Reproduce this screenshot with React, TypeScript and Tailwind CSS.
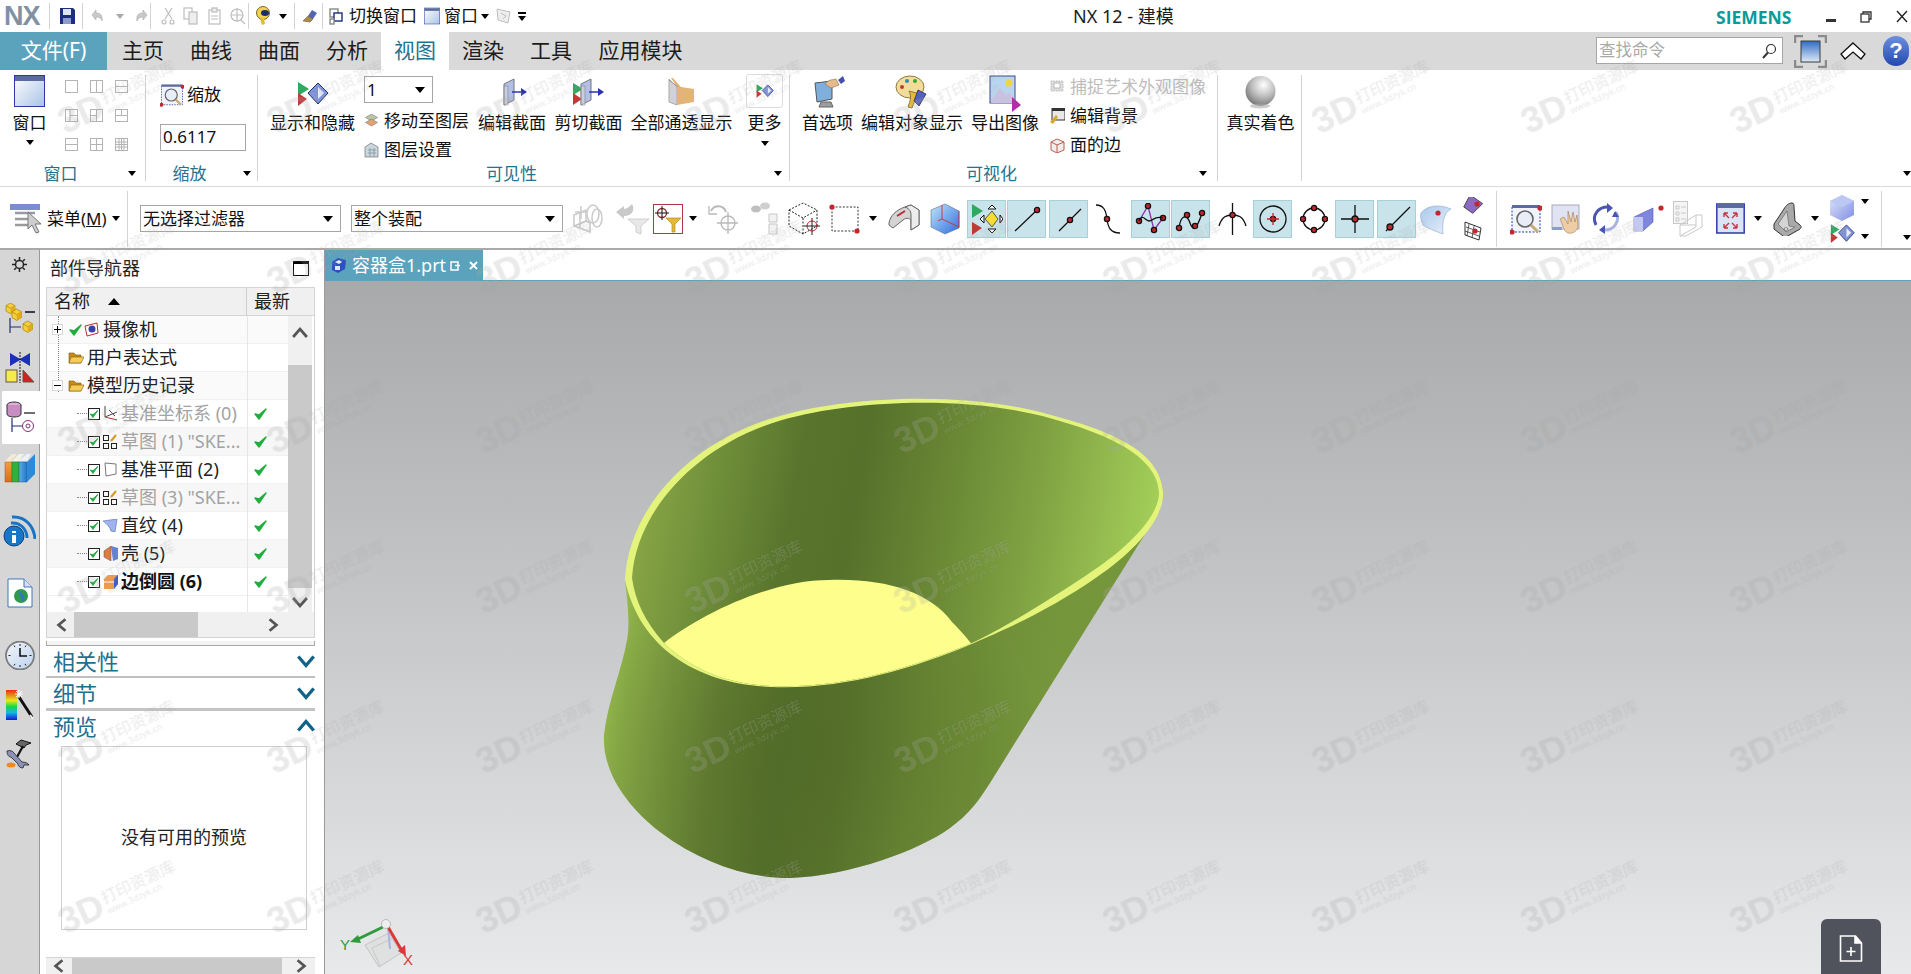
import React from "react";

type P = { className?: string };
const Tri = ({ className = "" }: P) => <div className={"w-0 h-0 shrink-0 border-x-[4px] border-t-[5px] border-x-transparent border-t-black " + className} />;
const Sep = ({ className = "" }: P) => <div className={"w-px bg-[#d4d4d4] shrink-0 " + className} />;
const R = "#c4262e";
const Dot = ({ x, y, r = 2.6 }: { x: number; y: number; r?: number }) => <circle cx={x} cy={y} r={r} fill={R} />;

const Save = ({ className }: P) => (
  <svg className={className} width="15" height="16" viewBox="0 0 15 16"><path d="M0 0h13l2 2v14H0z" fill="#1c2f7a" /><rect x="3" y="1" width="8" height="6" fill="#dfe6f5" /><rect x="3" y="10" width="8" height="6" fill="#8e9ccb" /></svg>
);
const Undo = ({ className, flip }: P & { flip?: boolean }) => (
  <svg className={className} width="13" height="14" viewBox="0 0 13 14"><path d={flip ? "M12 6 8 1v3C4 4 1 6 2 12c1-3 3-4 6-4v3z" : "M1 6 5 1v3c4 0 7 2 6 8-1-3-3-4-6-4v3z"} fill="#c9c9c9" stroke="#aaa" strokeWidth=".6" /></svg>
);
const GrayDoc = ({ className, kind }: P & { kind: number }) => (
  <svg className={className} width="16" height="18" viewBox="0 0 16 18" fill="none" stroke="#bdbdbd" strokeWidth="1.2">
    {kind === 0 && <><path d="M12 1 5 12M5 1l7 11" /><circle cx="4" cy="15" r="2" /><circle cx="12" cy="15" r="2" /></>}
    {kind === 1 && <><rect x="1" y="1" width="8" height="11" /><rect x="6" y="5" width="8" height="12" fill="#eee" /></>}
    {kind === 2 && <><rect x="2" y="3" width="11" height="14" /><rect x="5" y="1" width="5" height="4" fill="#eee" /><path d="M4 9h7M4 12h7" /></>}
    {kind === 3 && <><circle cx="7" cy="8" r="6" /><path d="M7 1v14M1 8h12M11 13l4 4" /></>}
  </svg>
);
const Ball = ({ className }: P) => (
  <svg className={className} width="16" height="20" viewBox="0 0 16 20"><circle cx="7" cy="7" r="6.5" fill="#f2d24a" stroke="#7a6a1c" /><ellipse cx="9" cy="7" rx="4" ry="3" fill="#1a2c70" /><path d="M4 13l2 6 3-1-1-5z" fill="#e4b93a" /></svg>
);
const Brush = ({ className }: P) => (
  <svg className={className} width="16" height="14" viewBox="0 0 16 14"><path d="M10 1l5 3-4 6-5-3z" fill="#5566b0" /><path d="M6 7l5 3-3 3-7-1z" fill="#b08a3e" stroke="#444" strokeWidth=".5" /></svg>
);
const SwitchWin = ({ className }: P) => (
  <svg className={className} width="15" height="17" viewBox="0 0 15 17" fill="#fff" stroke="#1d2c78" strokeWidth="1.4"><rect x="1" y="1" width="8" height="8" stroke="#888" /><rect x="5" y="5" width="8" height="8" /><rect x="1" y="11" width="4" height="5" stroke="#888" /></svg>
);
const WinIcon = ({ w, h, className }: P & { w: number; h: number }) => (
  <svg className={className} width={w} height={h} viewBox="0 0 31 32">
    <defs><linearGradient id="wg" x1="0" y1="0" x2="1" y2="1"><stop offset="0" stopColor="#ffffff" /><stop offset="1" stopColor="#a9c3e6" /></linearGradient></defs>
    <rect x=".5" y=".5" width="30" height="31" fill="url(#wg)" stroke="#2d3aa8" /><rect x="1" y="1" width="29" height="5" fill="#5b6b9c" />
  </svg>
);
const SmallGrid = ({ n }: { n: number }) => (
  <svg width="13" height="13" viewBox="0 0 13 13" fill="#fff" stroke="#b4b4b4"><rect x=".5" y=".5" width="12" height="12" />
    {[1, 4, 7, 8].includes(n) && <path d="M6.5 0v13" />}{[2, 6, 7, 8].includes(n) && <path d="M0 6.5h13" />}{n === 8 && <path d="M4 0v13M9 0v13M0 4h13M0 9h13" />}{n === 3 && <path d="M5 0v13M5 6.5h8" />}{n === 4 && <path d="M0 6.5h6.5" />}{n === 5 && <path d="M6.5 0v6.5M0 6.5h13" />}
  </svg>
);
const ZoomIcon = ({ className, w = 24, h = 24 }: P & { w?: number; h?: number }) => (
  <svg className={className} width={w} height={h} viewBox="0 0 32 32">
    <rect x="2" y="3" width="28" height="26" fill="#f2f4fb" stroke="#2d3aa8" strokeDasharray="2 1.5" /><rect x="2" y="2" width="28" height="3" fill="#5b6b9c" />
    <circle cx="15" cy="16" r="8" fill="#e8edf7" stroke="#666" strokeWidth="1.6" /><path d="M21 22l7 7" stroke="#c8a97c" strokeWidth="3" /><Dot x={30} y={5} /><Dot x={2} y={29} />
  </svg>
);
const ShowHide = ({ className, w = 32, h = 24 }: P & { w?: number; h?: number }) => (
  <svg className={className} width={w} height={h} viewBox="0 0 32 24">
    <path d="M1 0l11 7-11 7z" fill="#30a860" /><path d="M1 11l9 6-9 7z" fill="#c23838" /><path d="M21 1l10 10-10 11-10-11z" fill="#7f93d6" stroke="#1f2d70" strokeWidth="1" /><path d="M21 5l6 6-6 6z" fill="#e6ebfa" />
  </svg>
);
const Section = ({ className, cut }: P & { cut?: boolean }) => (
  <svg className={className} width="32" height="28" viewBox="0 0 32 28">
    {cut && <><path d="M0 5l10 6-10 6z" fill="#30a860" /><path d="M0 15l9 6-9 6z" fill="#c23838" /></>}
    <path d="M8 6l10-5v21L8 27z" fill="#b2bfe6" stroke="#777" /><path d="M4 8h4v19H4z" fill="#d9d9d9" stroke="#888" transform="translate(4 0)" opacity=".6" />
    <path d="M16 14h11" stroke="#2b32b0" strokeWidth="1.5" /><path d="M25 10l6 4-6 4z" fill="#2b32b0" />
  </svg>
);
const Trans = ({ className }: P) => (
  <svg className={className} width="27" height="30" viewBox="0 0 27 30"><path d="M1 2l8 8v18l-8-3z" fill="#d2d2d2" stroke="#aaa" /><path d="M3 1h2l8 9 13 2v13l-17 3V10z" fill="#e3b477" /><path d="M1 3l9 7" stroke="#999" /></svg>
);
const Layers = ({ className }: P) => (
  <svg className={className} width="15" height="14" viewBox="0 0 15 14"><path d="M7.5 0l6 3.5-6 3.5-6-3.5z" fill="#b9c7a4" stroke="#777" strokeWidth=".6" /><path d="M7.5 5l6 3.5-6 3.5-6-3.5z" fill="#e2a373" stroke="#777" strokeWidth=".6" /></svg>
);
const LayerSet = ({ className }: P) => (
  <svg className={className} width="15" height="16" viewBox="0 0 15 16"><path d="M7 1L1 5v10h13V5z" fill="#c9d6de" stroke="#777" strokeWidth=".7" /><path d="M4 8h8M4 11h8M6 6v9M10 6v9" stroke="#7c8f9a" strokeWidth=".7" /></svg>
);
const Prefs = ({ className }: P) => (
  <svg className={className} width="34" height="36" viewBox="0 0 34 36"><path d="M4 8l17-2v18l-15 3z" fill="#7fb0dd" stroke="#555" /><path d="M10 27h10l2 5H8z" fill="#9d9d9d" stroke="#666" /><path d="M14 9c4-5 8-4 11-5l3 6-8 3z" fill="#e5bb8f" stroke="#8b6a44" strokeWidth=".6" /><path d="M27 5l5-4 2 5-4 3z" fill="#4650b0" /></svg>
);
const Palette = ({ className }: P) => (
  <svg className={className} width="34" height="38" viewBox="0 0 34 38"><ellipse cx="15" cy="12" rx="14" ry="11" fill="#f1dc9a" stroke="#8d7a3e" /><circle cx="7" cy="12" r="2" fill="#c33" /><circle cx="12" cy="6" r="2" fill="#38b" /><circle cx="20" cy="6" r="2" fill="#3a3" /><path d="M14 16c3 6 1 10-1 16l4 1c2-5 3-9 8-14z" fill="#e5b93b" stroke="#8d7a3e" /><path d="M23 15l8 4-7 12-5-5z" fill="#5161c4" stroke="#222" strokeWidth=".7" /></svg>
);
const ExportImg = ({ className }: P) => (
  <svg className={className} width="32" height="37" viewBox="0 0 32 37"><rect x="1" y="1" width="25" height="27" fill="#b9d4ee" stroke="#3a4a8a" /><circle cx="20" cy="8" r="3.5" fill="#f2d53c" /><path d="M2 25l9-12 6 7 3-3 6 8v3H2z" fill="#c8c1e0" /><path d="M23 22l9 8-9 7z" fill="#b02fa5" /></svg>
);
const Sphere = ({ className }: P) => (
  <svg className={className} width="33" height="34" viewBox="0 0 33 34"><defs><radialGradient id="sp" cx=".6" cy=".3" r=".8"><stop offset="0" stopColor="#fff" /><stop offset=".5" stopColor="#bbb" /><stop offset="1" stopColor="#666" /></radialGradient></defs><circle cx="16.5" cy="16" r="15" fill="url(#sp)" /><ellipse cx="16" cy="31" rx="10" ry="2.5" fill="#aaa" opacity=".6" /></svg>
);
const Menu = ({ className }: P) => (
  <svg className={className} width="33" height="32" viewBox="0 0 33 32"><rect x="0" y="1" width="30" height="6" fill="#7c8bd2" /><path d="M5 10h20M5 16h16M5 22h16" stroke="#9b9b9b" strokeWidth="2.5" /><path d="M18 9v17l4-4 4 8 3-1-4-8h6z" fill="#cfcfcf" stroke="#777" /></svg>
);
const Gray1 = ({ className }: P) => (
  <svg className={className} width="31" height="30" viewBox="0 0 31 30" fill="none" stroke="#cacaca" strokeWidth="1.5"><path d="M2 11l12-5v11L2 22zM2 22l16 6v-9l-4-2M8 8v17" /><path d="M9 2v13M3 8h12" /><ellipse cx="21" cy="10" rx="6" ry="9" /><ellipse cx="25" cy="14" rx="5" ry="9" /></svg>
);
const Gray2 = ({ className }: P) => (
  <svg className={className} width="35" height="32" viewBox="0 0 35 32"><path d="M1 9l8-6v3c3 0 6-3 8-5 3 5 1 12-8 12v3z" fill="#c9c9c9" /><path d="M13 16h21l-8 7v8l-5-2v-6z" fill="#e8e8e8" stroke="#d0d0d0" /></svg>
);
const Filter = ({ className }: P) => (
  <svg className={className} width="30" height="30" viewBox="0 0 30 30"><rect x=".5" y=".5" width="29" height="29" fill="#fff" stroke="#a83a44" /><circle cx="9" cy="9" r="4.5" fill="none" stroke="#8a2a32" strokeWidth="1.3" /><path d="M9 2v14M2 9h14" stroke="#111" /><path d="M13 14h15l-6 6v8h-3v-8z" fill="#e7b737" stroke="#b58c1e" strokeWidth=".7" /></svg>
);
const UndoTarget = ({ className }: P) => (
  <svg className={className} width="30" height="32" viewBox="0 0 30 32" fill="none" stroke="#b9b9b9" strokeWidth="1.3"><path d="M3 8c3-6 12-7 15 1" strokeWidth="2" /><path d="M1 3v8h8" /><circle cx="20" cy="20" r="7" /><path d="M20 9v22M9 20h21" /></svg>
);
const Binoc = ({ className }: P) => (
  <svg className={className} width="28" height="34" viewBox="0 0 28 34"><ellipse cx="6" cy="7" rx="5" ry="3.5" fill="#bfbfbf" /><ellipse cx="15" cy="4" rx="5" ry="3.5" fill="#cfcfcf" /><path d="M19 12h8v8h-8zM19 22h8v10h-8z" fill="#f2f2f2" stroke="#c6c6c6" /></svg>
);
const DashCube = ({ className }: P) => (
  <svg className={className} width="32" height="34" viewBox="0 0 32 34" fill="none" stroke="#222" strokeDasharray="2 1.5"><path d="M1 8l14-7 14 7v16l-14 8-14-8zM1 8l14 8 14-8M15 16v16" /><circle cx="24" cy="24" r="5" stroke={R} strokeDasharray="0" /><path d="M24 16v17M16 24h16" strokeDasharray="0" stroke="#222" /></svg>
);
const DashBox = ({ className }: P) => (
  <svg className={className} width="31" height="30" viewBox="0 0 31 30"><rect x="3" y="3" width="26" height="24" fill="none" stroke="#333" strokeDasharray="2 1.6" /><Dot x={3} y={3} /><Dot x={28} y={27} /></svg>
);
const SolidA = ({ className }: P) => (
  <svg className={className} width="32" height="30" viewBox="0 0 32 30"><path d="M1 19C2 12 8 6 17 3l6-2 8 5v15l-8 5v-8c0-4-4-5-8-2L5 24l-4-3z" fill="#d4d4d4" stroke="#666" /><path d="M23 1l-6 2c3 1 6 3 6 8v15l8-5V6z" fill="#ececec" stroke="#666" /><path d="M9 12l8-5" stroke={R} strokeWidth="2" /></svg>
);
const SolidB = ({ className }: P) => (
  <svg className={className} width="30" height="32" viewBox="0 0 30 32"><defs><linearGradient id="bl" x1="0" y1="0" x2="1" y2="1"><stop offset="0" stopColor="#bfe6fa" /><stop offset="1" stopColor="#2f6de0" /></linearGradient></defs><path d="M1 7L15 1l14 7v17l-14 6-14-7z" fill="url(#bl)" stroke="#5a6f8a" strokeWidth=".6" /><path d="M12 2v14l17 8M12 16l-4 2M29 8v16" fill="none" stroke="#c33" strokeWidth=".9" /></svg>
);
const Hi = ({ children, className = "" }: P & { children: React.ReactNode }) => (
  <div className={"w-[39px] h-[38px] shrink-0 bg-[#c9e3ea] border border-[#a8d0d8] flex items-center justify-center " + className}>{children}</div>
);
const V = ({ children, w = 30, h = 30, className }: P & { children: React.ReactNode; w?: number; h?: number }) => (
  <svg className={className} width={w} height={h} viewBox={`0 0 ${w} ${h}`} fill="none" stroke="#111" strokeWidth="1.3">{children}</svg>
);
const Snap = () => (
  <svg width="32" height="32" viewBox="0 0 32 32"><path d="M1 6l11 7-11 7z" fill="#30a860" transform="translate(0 -5)" /><path d="M1 19l10 6-10 7z" fill="#c23838" /><path d="M21 8l6 8-6 8-7-8z" fill="#f4dc36" stroke="#555" /><path d="M21 2l4 4h-8zM21 30l4-4h-8zM13 12l-4 4 4 4zM29 12l3 4-3 4z" fill="#fff" stroke="#111" /></svg>
);
const Sm = ({ kind }: { kind: number }) => (
  <svg width="22" height="20" viewBox="0 0 22 20">
    {kind === 0 && <><path d="M2 2h18l-3 16H4z" fill="#8a6ac2" stroke="#444" transform="rotate(35 11 10) scale(.85)" /><Dot x={15} y={7} /></>}
    {kind === 1 && <><path d="M3 1l16 6-2 12-14-5z" fill="#fff" stroke="#333" /><path d="M7 3l-2 12M12 5l-2 12M4 6l14 5M3 10l14 5" stroke="#333" strokeWidth=".8" /><Dot x={13} y={10} /></>}
  </svg>
);
const Rotate = ({ className }: P) => (
  <svg className={className} width="30" height="31" viewBox="0 0 30 31" fill="none"><path d="M5 22C0 12 8 3 18 4" stroke="#4a55b0" strokeWidth="3" /><path d="M25 9c5 10-3 19-13 18" stroke="#a9b3e0" strokeWidth="3" /><path d="M16 0l6 5-6 5z" fill="#4a55b0" /><path d="M14 22l-6 5 6 4z" fill="#4a55b0" /><path d="M24 8l4 6h-7z" fill="#4a55b0" /></svg>
);
const Hand = ({ className }: P) => (
  <svg className={className} width="29" height="32" viewBox="0 0 29 32"><rect x="1" y="2" width="27" height="24" fill="#dfe3f3" stroke="#aab" /><rect x="1" y="24" width="10" height="3" fill="#8f9bd0" /><path d="M9 16c3 5 3 12 8 14 5 1 10-2 10-8l-1-10-2 7-2-10-2 10-3-11 0 13-4-7z" fill="#eecda4" stroke="#a98763" strokeWidth=".7" /></svg>
);
const Prism = ({ className }: P) => (
  <svg className={className} width="31" height="28" viewBox="0 0 31 28"><path d="M1 12L20 3v14L10 26H1z" fill="#7e87de" stroke="#55a" strokeWidth=".6" /><path d="M1 12h9v14H1z" fill="#c4c9f2" /><Dot x={28} y={3} /></svg>
);
const Wire = ({ className }: P) => (
  <svg className={className} width="30" height="36" viewBox="0 0 30 36" fill="none" stroke="#c9c9c9"><rect x=".5" y=".5" width="14" height="22" fill="#f5f5f5" /><path d="M3 5h3v3H3zM3 11h3v3H3zM3 17h3v3H3zM8 6h5M8 12h5M8 18h5M7 24l16-10h6v12l-16 9H7zM7 24h16v-10M23 24v2l-16 9" /></svg>
);
const Fit = ({ className }: P) => (
  <svg className={className} width="29" height="31" viewBox="0 0 29 31"><rect x=".8" y="1" width="27.4" height="29" fill="#dbe3f6" stroke="#2d3aa8" strokeWidth="1.5" /><rect x="1" y="1" width="27" height="4" fill="#5b6b9c" /><path d="M8 10l5 5M8 10h4M8 10v4M21 10l-5 5M21 10h-4M21 10v4M8 25l5-5M8 25h4M8 25v-4M21 25l-5-5M21 25h-4M21 25v-4" stroke="#c8343c" strokeWidth="1.4" fill="none" /></svg>
);
const Sheet = ({ className }: P) => (
  <svg className={className} width="29" height="34" viewBox="0 0 29 34"><path d="M1 22L11 7c2-4 5-6 8-6 2 0 2 2 2 4l1 14 5 4c2 2 1 3 0 4l-14 8c-1 0-2 0-3-1L1 27z" fill="#a9a9a9" stroke="#333" /><path d="M5 22l9-13 2 15 6 1-9 5z" fill="#d4d4d4" stroke="#666" strokeWidth=".7" /><ellipse cx="13" cy="27" rx="2" ry="1.3" fill="#eee" stroke="#444" strokeWidth=".6" /></svg>
);
const MiniCube = ({ className }: P) => (
  <svg className={className} width="25" height="26" viewBox="0 0 25 26"><defs><linearGradient id="mc" x1="0" y1="0" x2="1" y2="1"><stop offset="0" stopColor="#e0e6fb" /><stop offset="1" stopColor="#7f8ee0" /></linearGradient></defs><path d="M12 0l12 6v14l-12 6-12-6V6z" fill="url(#mc)" /><path d="M12 0l12 6-12 6L0 6z" fill="#bcc7f2" /></svg>
);
const Maxi = ({ className }: P) => (
  <svg className={className} width="33" height="33" viewBox="0 0 33 33"><defs><linearGradient id="mx" x1="0" y1="0" x2="0" y2="1"><stop offset="0" stopColor="#2f6cc4" /><stop offset="1" stopColor="#dfe9f7" /></linearGradient></defs><path d="M1 8V1h8M24 1h8v7M1 25v7h8M24 32h8v-7" fill="none" stroke="#8b8b8b" strokeWidth="2.5" /><rect x="7" y="6" width="19" height="21" fill="url(#mx)" stroke="#3b3b3b" /></svg>
);

const Big = ({ icon, label, w, className = "" }: { icon: React.ReactNode; label: string; w: string; className?: string }) => (
  <div className={"flex flex-col items-center shrink-0 " + w + " " + className}>
    <div className="h-[36px] flex items-start justify-center">{icon}</div>
    <div className="h-[24px] leading-[24px] whitespace-nowrap text-[17px] text-[#111]">{label}</div>
  </div>
);
const Group = ({ label, w, tri, children }: { label: string; w: string; tri: string; children: React.ReactNode }) => (
  <div className={"h-[106px] flex flex-col shrink-0 border-r border-[#d4d4d4] " + w}>
    <div className="flex h-[89px] shrink-0">{children}</div>
    <div className="relative h-[19px] shrink-0 flex items-center justify-center pr-[24px] text-[17px] leading-[19px] text-[#1f7390]">
      {label}
      <Tri className={"absolute top-[7px] " + tri} />
    </div>
  </div>
);

const Select = ({ text, w }: { text: string; w: string }) => (
  <div className={"h-[27px] shrink-0 bg-white border border-[#a6a6a6] flex items-center justify-between pl-[2px] pr-[7px] text-[17px] text-[#111] " + w}>
    <span>{text}</span><div className="w-0 h-0 border-x-[5px] border-t-[6px] border-x-transparent border-t-black" />
  </div>
);

const Check = ({ className = "" }: P) => (
  <svg className={className} width="13" height="12" viewBox="0 0 13 12"><path d="M1 6l4 5L12 1 5 7z" fill="#1fae3d" stroke="#1fae3d" strokeWidth="1.4" strokeLinejoin="round" /></svg>
);
const CheckBox = () => (
  <div className="w-[12px] h-[12px] shrink-0 border border-[#222] bg-white flex items-center justify-center"><Check className="scale-90" /></div>
);
const Folder = () => (
  <svg width="16" height="13" viewBox="0 0 16 13" className="shrink-0"><path d="M1 2h5l2 2h5v8H1z" fill="#c98a17" stroke="#7c5a10" strokeWidth=".6" /><path d="M3 6h13l-3 6H1z" fill="#f6cc56" stroke="#7c5a10" strokeWidth=".6" /></svg>
);
const Expand = ({ minus }: { minus?: boolean }) => (
  <div className="relative w-[11px] h-[11px] shrink-0 bg-white border border-[#d8d8d8] flex items-center justify-center"><div className="w-[7px] h-px bg-black" />{!minus && <div className="absolute w-px h-[7px] bg-black" />}</div>
);
const Icons: Record<string, React.ReactNode> = {
  cs: <svg width="15" height="15" viewBox="0 0 15 15" fill="none" strokeWidth="1"><path d="M2 0v11l12-5" stroke="#444" /><path d="M2 11l12 3" stroke={R} /><path d="M6 4l6 6" stroke="#447" /></svg>,
  sk: <svg width="15" height="15" viewBox="0 0 15 15" fill="none" stroke="#222"><rect x=".5" y="1.5" width="5" height="5" /><rect x=".5" y="9.5" width="5" height="5" /><rect x="8.5" y="9.5" width="5" height="5" /><path d="M8 7l5-6" stroke="#d69a1f" strokeWidth="2" /></svg>,
  pl: <svg width="14" height="15" viewBox="0 0 14 15" fill="#fff" stroke="#777"><path d="M1 1l11 1v10l-10 2z" /></svg>,
  ru: <svg width="15" height="13" viewBox="0 0 15 13"><path d="M0 2l14-2-2 13-4-1C7 8 4 5 0 2z" fill="#9fb4ee" stroke="#5666b0" strokeWidth=".6" /></svg>,
  sh: <svg width="15" height="15" viewBox="0 0 15 15"><path d="M8 0l7 2v11l-5 2z" fill="#6680d4" /><path d="M1 5l7-5v15L1 11z" fill="#e07b3e" stroke="#555" strokeWidth=".5" /></svg>,
  bl: <svg width="15" height="14" viewBox="0 0 15 14"><path d="M5 0h10v9l-4 5H1V4z" fill="#ee9a4d" /><path d="M11 5h4V0L11 4z" fill="#3d5fc8" /><path d="M11 4v10l4-5V0z" fill="#3d5fc8" /><path d="M1 7h10" stroke="#fff" /></svg>,
};
const rows = [
  { icon: "cs", text: "基准坐标系 (0)", cls: "text-[#a3a3a3]", bg: "bg-white" },
  { icon: "sk", text: '草图 (1) "SKE...', cls: "text-[#a3a3a3]", bg: "bg-[#f7f7f7]" },
  { icon: "pl", text: "基准平面 (2)", cls: "text-[#222]", bg: "bg-white" },
  { icon: "sk", text: '草图 (3) "SKE...', cls: "text-[#a3a3a3]", bg: "bg-[#f7f7f7]" },
  { icon: "ru", text: "直纹 (4)", cls: "text-[#222]", bg: "bg-white" },
  { icon: "sh", text: "壳 (5)", cls: "text-[#222]", bg: "bg-[#f7f7f7]" },
  { icon: "bl", text: "边倒圆 (6)", cls: "text-[#111] font-bold", bg: "bg-white" },
];
const Cv = ({ d, className, stroke = "#555", w = 14, h = 14, sw = 2.4 }: P & { d: string; stroke?: string; w?: number; h?: number; sw?: number }) => (
  <svg className={className} width={w} height={h} viewBox="0 0 14 14" fill="none" stroke={stroke} strokeWidth={sw}><path d={d} /></svg>
);
const UP = "M1 10.5l6-7 6 7", DN = "M1 3.5l6 7 6-7", LF = "M10 2L4 7l6 5", RT = "M4 2l6 5-6 5";

const SectionHead = ({ t, d, cls }: { t: string; d: string; cls: string }) => (
  <div className={"flex items-center justify-between pl-[7px] pr-[0px] text-[22px] text-[#1f6f8d] leading-[30px] " + cls}>
    <span>{t}</span><Cv d={d} stroke="#0f6385" w={18} h={18} sw={2.6} />
  </div>
);

const Cube3 = ({ x, y, s }: { x: number; y: number; s: number }) => (
  <g transform={`translate(${x} ${y}) scale(${s})`}><path d="M0 3l5-3 5 3v6l-5 3-5-3z" fill="#f6cf3c" stroke="#a8860f" strokeWidth=".8" /><path d="M0 3l5 3 5-3" fill="none" stroke="#a8860f" strokeWidth=".8" /><path d="M5 6v6l5-3V3z" fill="#e0ac1c" /></g>
);

const Side = () => (
  <div className="w-[40px] shrink-0 bg-[#d6d6d6] border-r border-[#9a9a9a] flex flex-col items-center">
    <svg className="mt-[7px]" width="15" height="15" viewBox="0 0 15 15" fill="none" stroke="#222" strokeWidth="1.5"><circle cx="7.5" cy="7.5" r="4" /><path d="M7.5 0v3M7.5 12v3M0 7.5h3M12 7.5h3M2.2 2.2l2 2M10.8 10.8l2 2M2.2 12.8l2-2M10.8 4.2l2-2" /></svg>
    <svg className="mt-[31px]" width="30" height="31" viewBox="0 0 30 31"><Cube3 x={1} y={0} s={0.9} /><Cube3 x={7} y={6} s={0.95} /><path d="M5 15v15M5 24h11M20 9h10" stroke="#1d2c78" strokeWidth="1.2" /><path d="M20 9h10" stroke="#111" strokeWidth="1.2" /><Cube3 x={18} y={18} s={0.95} /></svg>
    <svg className="mt-[18px]" width="30" height="31" viewBox="0 0 30 31"><path d="M5 1l10 6 10-6v13l-10-6-10 6z" fill="#1c2fb8" /><rect x="1" y="18" width="11" height="12" fill="#f4ec4c" stroke="#654" /><path d="M18 18l11 12H18z" fill="#d21f1f" stroke="#654" /><path d="M15 0v31" stroke="#111" strokeDasharray="2 1" /></svg>
    <div className="relative left-[1px] mt-[8px] w-[38px] h-[53px] bg-white flex items-center pl-[4px] rounded-l-[1px]">
      <svg width="30" height="33" viewBox="0 0 30 33"><ellipse cx="8" cy="4" rx="7" ry="3" fill="#dcaed8" stroke="#333" /><path d="M1 4v9c0 4 14 4 14 0V4" fill="#c88ec2" stroke="#333" /><path d="M6 17v14M6 25h10" stroke="#1d2c78" strokeWidth="1.2" fill="none" /><path d="M18 12h11" stroke="#111" strokeWidth="1.2" /><circle cx="22" cy="25" r="5.5" fill="none" stroke="#8a2d77" /><circle cx="22" cy="25" r="2" fill="none" stroke="#8a2d77" /></svg>
    </div>
    <svg className="mt-[9px]" width="32" height="30" viewBox="0 0 32 30"><defs><linearGradient id="bk1" x1="0" y1="0" x2="0" y2="1"><stop offset="0" stopColor="#f0a03a" /><stop offset="1" stopColor="#e06a12" /></linearGradient><linearGradient id="bk3" x1="0" y1="0" x2="1" y2="0"><stop offset="0" stopColor="#58aee8" /><stop offset="1" stopColor="#2478c6" /></linearGradient></defs><path d="M1 8l7-7h5L7 8v21H1z" fill="#f4e9d4" /><path d="M1 9h7v20H1z" fill="url(#bk1)" stroke="#a85a10" strokeWidth=".5" /><path d="M8 9h7v20H8z" fill="#32b13a" stroke="#1f7a26" strokeWidth=".5" /><path d="M8 8l7-7h5l-5 7z" fill="#eef4e6" /><path d="M15 9h8v20h-8z" fill="url(#bk3)" stroke="#1c5f9e" strokeWidth=".5" /><path d="M15 8l8-7h4l-4 7z" fill="#e9f2fa" /><path d="M23 9l8-8v20l-8 8z" fill="#2e89d6" /></svg>
    <svg className="mt-[31px]" width="33" height="33" viewBox="0 0 33 33" fill="none"><circle cx="11" cy="22" r="10" fill="#1677c8" stroke="#0d3f7a" /><path d="M9 17h4v2H9zM9 21h4v8H9z" fill="#fff" /><path d="M8 9c9-1 16 6 16 15M9 3c13-1 22 9 23 22" stroke="#1673c5" strokeWidth="3" /></svg>
    <svg className="mt-[31px]" width="26" height="30" viewBox="0 0 26 30"><path d="M1 1h16l8 8v20H1z" fill="#fff" stroke="#4276b8" /><path d="M17 1v8h8" fill="#d3e1f2" stroke="#4276b8" /><circle cx="14" cy="18" r="7" fill="#2f9a4a" /><path d="M11 13c5 2 9 7 5 11" fill="#3476c4" /></svg>
    <svg className="mt-[33px]" width="30" height="29" viewBox="0 0 30 29"><defs><linearGradient id="ck" x1="0" y1="0" x2="1" y2="1"><stop offset="0" stopColor="#f2f6fb" /><stop offset="1" stopColor="#bcd2ee" /></linearGradient></defs><circle cx="15" cy="14.5" r="14" fill="url(#ck)" stroke="#7d7d7d" strokeWidth="1.8" /><path d="M15 3v2M15 24v2M3.5 14.5h2M24.5 14.5h2M9 4.5l1 1.6M21 4.5l-1 1.6M9 24.5l1-1.6M21 24.5l-1-1.6" stroke="#222" strokeWidth="1" /><path d="M15 7v8h7" stroke="#111" strokeWidth="1.6" fill="none" /></svg>
    <svg className="mt-[20px]" width="28" height="31" viewBox="0 0 28 31"><defs><linearGradient id="rb" x1="0" y1="0" x2="0" y2="1"><stop offset="0" stopColor="#ee2a1a" /><stop offset=".35" stopColor="#e8e81a" /><stop offset=".55" stopColor="#19d845" /><stop offset=".75" stopColor="#16b8e0" /><stop offset="1" stopColor="#1a18d8" /></linearGradient></defs><rect width="11" height="30" fill="url(#rb)" /><path d="M13 7l13 20" stroke="#111" strokeWidth="3" /><path d="M24 25l3 4" stroke="#eee" strokeWidth="2" /><path d="M13 0v8M9 4h8M10 1l6 6M16 1l-6 6" stroke="#fff" strokeWidth="1" /></svg>
    <svg className="mt-[18px]" width="27" height="30" viewBox="0 0 27 30"><path d="M10 5l5-4 10 3-5 2-2 3z" fill="#666" stroke="#111" /><path d="M17 7L11 18" stroke="#111" strokeWidth="2.2" /><path d="M1 12c3-1 6 0 7 2l8 9c3 0 6 1 7 3l-5 0-1 3c-3 0-5-2-5-4L5 18c-2 0-4-2-4-6z" fill="#8b92b6" stroke="#222" strokeWidth=".8" /><ellipse cx="5" cy="26" rx="4.5" ry="2.5" fill="#ef8a1f" /></svg>
  </div>
);

const Nav = () => (
  <div className="w-[285px] shrink-0 bg-white border-r border-[#9a9a9a] pl-[6px] pr-[9px] flex flex-col">
    <div className="h-[37px] shrink-0 flex items-center justify-between pl-[4px] pr-[6px] text-[18px] text-[#222]">
      <span>部件导航器</span>
      <div className="w-[16px] h-[15px] border border-black border-t-[3px]" />
    </div>
    <div className="h-[351px] shrink-0 border border-[#d4d4d4] flex flex-col">
      <div className="h-[28px] shrink-0 flex bg-[#f0f0f0] border-b border-[#d4d4d4] text-[18px] text-[#222]">
        <div className="w-[200px] flex items-center pl-[7px] border-r border-[#cfcfcf]"><span>名称</span><div className="ml-[18px] w-0 h-0 border-x-[6px] border-b-[7px] border-x-transparent border-b-black" /></div>
        <div className="flex-1 pl-[7px] flex items-center">最新</div>
      </div>
      <div className="flex h-[296px] shrink-0">
        <div className="relative w-[241px] shrink-0 text-[18px] text-[#222]">
          <div className="absolute left-[11px] top-0 h-[76px] border-l border-dotted border-[#888]" />
          <div className="absolute left-[29px] top-[84px] h-[181px] border-l border-dotted border-[#888]" />
          <div className="h-[28px] flex items-center bg-[#fafafa] pl-[5px] border-b border-[#f1f1f1]"><Expand /><Check className="ml-[6px]" /><svg className="ml-[2px] shrink-0" width="15" height="15" viewBox="0 0 15 15"><path d="M1 4l12-3 1 10-11 3z" fill="#fff" stroke="#c02a2a" /><circle cx="8" cy="7" r="3.5" fill="#3a3fa8" /></svg><span className="ml-[4px]">摄像机</span></div>
          <div className="h-[28px] flex items-center pl-[21px] border-b border-[#f1f1f1]"><Folder /><span className="ml-[3px]">用户表达式</span></div>
          <div className="h-[28px] flex items-center bg-[#fafafa] pl-[5px] border-b border-[#f1f1f1]"><Expand minus /><span className="ml-[5px]" /><Folder /><span className="ml-[3px]">模型历史记录</span></div>
          {rows.map((r, i) => (
            <div key={i} className={"relative h-[28px] flex items-center border-b border-[#f1f1f1] pl-[41px] " + r.bg}>
              <div className="absolute left-[30px] top-[13px] w-[10px] border-t border-dotted border-[#888]" />
              <CheckBox />
              <div className="ml-[2px] w-[17px] shrink-0 flex justify-center">{Icons[r.icon]}</div>
              <span className={"ml-[2px] whitespace-nowrap " + r.cls}>{r.text}</span>
            </div>
          ))}
          <div className="absolute left-[200px] top-0 bottom-0 border-l border-[#e6e6e6]" />
          <div className="absolute left-[207px] top-[84px] flex flex-col">
            {[0, 1, 2, 3, 4, 5, 6].map((i) => <div key={i} className="h-[28px] flex items-center"><Check /></div>)}
          </div>
        </div>
        <div className="w-[24px] shrink-0 bg-[#f0f0f0] flex flex-col items-center relative">
          <Cv d={UP} className="mt-[9px]" w={16} h={16} />
          <div className="w-[24px] h-[223px] mt-[24px] bg-[#c9c9c9]" />
          <Cv d={DN} className="mt-[6px]" w={16} h={16} />
        </div>
      </div>
      <div className="h-[25px] shrink-0 bg-[#f0f0f0] flex items-center">
        <Cv d={LF} className="ml-[7px]" w={16} h={16} />
        <div className="ml-[4px] w-[124px] h-[25px] bg-[#c9c9c9]" />
        <Cv d={RT} className="ml-[67px]" w={16} h={16} />
      </div>
    </div>
    <div className="h-[5px] mt-[3px] shrink-0 bg-[#f3f3f3] border border-t-0 border-[#a9a9a9]" />
    <SectionHead t="相关性" d={DN} cls="border-b-2 border-[#c0c0c0]" />
    <SectionHead t="细节" d={DN} cls="border-b-[3px] border-[#c4c4c4]" />
    <SectionHead t="预览" d={UP} cls="" />
    <div className="ml-[15px] mt-[5px] w-[246px] h-[184px] pb-[2px] shrink-0 border border-[#d0d0d0] flex items-center justify-center text-[18px] text-[#222]">没有可用的预览</div>
    <div className="flex-1" />
    <div className="h-[17px] shrink-0 border-t border-[#d4d4d4] bg-[#f0f0f0] flex items-center overflow-hidden">
      <Cv d={LF} className="ml-[5px]" w={16} h={16} />
      <div className="ml-[5px] w-[210px] h-[17px] bg-[#c9c9c9]" />
      <Cv d={RT} className="ml-[11px]" w={16} h={16} />
    </div>
  </div>
);

const Part = () => (
  <svg className="absolute left-[270px] top-[109px]" width="620" height="500" viewBox="595 390 620 500">
    <defs>
      <linearGradient id="bodyG" gradientUnits="userSpaceOnUse" x1="600" y1="700" x2="1040" y2="770">
        <stop offset="0" stopColor="#9cc050" /><stop offset=".05" stopColor="#8eb049" /><stop offset=".15" stopColor="#7c9b40" /><stop offset=".28" stopColor="#647f32" /><stop offset=".42" stopColor="#55702b" /><stop offset=".55" stopColor="#5a752d" /><stop offset=".72" stopColor="#6b8935" /><stop offset="1" stopColor="#76963c" />
      </linearGradient>
      <radialGradient id="bodyL" gradientUnits="userSpaceOnUse" cx="800" cy="760" r="240">
        <stop offset="0" stopColor="#4d6626" stopOpacity=".5" /><stop offset="1" stopColor="#4d6626" stopOpacity="0" />
      </radialGradient>
      <linearGradient id="innerG" gradientUnits="userSpaceOnUse" x1="640" y1="470" x2="1150" y2="560">
        <stop offset="0" stopColor="#8aa846" /><stop offset=".14" stopColor="#71903a" /><stop offset=".3" stopColor="#59752d" /><stop offset=".42" stopColor="#56712b" /><stop offset=".58" stopColor="#688634" /><stop offset=".75" stopColor="#7e9f41" /><stop offset="1" stopColor="#a3cf59" />
      </linearGradient>
      <clipPath id="innerC"><path d="M632 578C636 512 695 445 782 420 852 400 960 396 1038 415 1105 432 1157 455 1159 492 1160 516 1127 548 1094 570 1050 600 1000 630 974 642 910 669 840 689 771 686 722 684 688 666 664 643 645 622 635 600 632 578Z" /></clipPath>
    </defs>
    <path d="M625 580C628 605 630 625 627 640 622 670 608 700 604 735 602 770 625 805 660 832 700 862 745 878 790 878 850 876 920 850 950 828 968 815 978 802 990 783L1160 510 974 560 700 520Z" fill="url(#bodyG)" />
    <path d="M625 580C628 605 630 625 627 640 622 670 608 700 604 735 602 770 625 805 660 832 700 862 745 878 790 878 850 876 920 850 950 828 968 815 978 802 990 783L1160 510 974 560 700 520Z" fill="url(#bodyL)" />
    <path d="M625 580C628 510 690 440 780 416 850 396 960 392 1040 412 1110 430 1160 450 1163 492 1165 520 1130 555 1097 577 1050 610 1000 632 974 643 910 670 840 690 771 687 700 684 640 650 625 580Z" fill="#e4f47a" />
    <g clipPath="url(#innerC)">
      <rect x="620" y="390" width="545" height="310" fill="url(#innerG)" />
      <path d="M664 643C700 615 770 580 829 580 885 578 930 592 952 622 962 632 972 644 978 652L900 710 700 700Z" fill="#fdfe8c" />
    </g>
  </svg>
);

const Triad = () => (
  <svg className="absolute left-[10px] bottom-[6px]" width="80" height="56" viewBox="335 912 80 56" fill="none">
    <path d="M365 945l24-12 12 20-22 14z" fill="#d8d8d8" fillOpacity=".45" stroke="#c4c4c4" /><path d="M372 948l23-11M380 966l-8-18" stroke="#c8c8c8" />
    <path d="M388 927l2 22" stroke="#a9b5df" strokeWidth="2" />
    <path d="M383 927l-27 13" stroke="#2f9a3e" strokeWidth="3" /><path d="M358 935l-8 7 11 1z" fill="#2f9a3e" />
    <path d="M388 927l14 24" stroke="#d83a3a" strokeWidth="3" /><path d="M398 951l8 5-1-11z" fill="#d83a3a" />
    <circle cx="386" cy="924" r="4.5" fill="#eee" stroke="#bbb" />
    <text x="340" y="950" fontSize="15" fill="#2f9a3e" fontFamily="Liberation Sans">Y</text>
    <text x="403" y="965" fontSize="15" fill="#d83a3a" fontFamily="Liberation Sans">X</text>
  </svg>
);

const Viewport = () => (
  <div className="flex-1 flex flex-col min-w-0">
    <div className="h-[31px] shrink-0 bg-white flex items-end border-b-[1px] border-[#5ba3bc]">
      <div className="h-[30px] w-[158px] bg-[#5ba3bc] flex items-center pl-[7px] text-white text-[18px]">
        <svg width="14" height="15" viewBox="0 0 14 15"><path d="M6 0l8 2-1 9-7 4-6-3V4z" fill="#2d4fc2" /><path d="M3 4l4-2 3 2-3 2z" fill="#e9eefb" /><path d="M3 8h5v4H3z" fill="#dfe7fb" /></svg>
        <span className="ml-[6px] whitespace-nowrap">容器盒1.prt</span>
        <svg className="ml-[4px] shrink-0" width="11" height="11" viewBox="0 0 11 11" fill="none" stroke="#fff" strokeWidth="1.5"><rect x="1" y="2" width="7" height="8" /><path d="M5 5.5h5" /></svg>
        <svg className="ml-[8px] shrink-0" width="9" height="9" viewBox="0 0 9 9" stroke="#fff" strokeWidth="2"><path d="M1 1l7 7M8 1L1 8" /></svg>
      </div>
    </div>
    <div className="relative flex-1 bg-gradient-to-b from-[#a8a9aa] to-[#e8e9ea] overflow-hidden">
      <Part />
      <Triad />
      <div className="absolute left-[1496px] bottom-0 w-[60px] h-[55px] bg-[#50535c] rounded-t-[6px] flex items-start justify-center pt-[16px]">
        <svg width="24" height="28" viewBox="0 0 24 28" fill="none" stroke="#fff" strokeWidth="1.6"><path d="M1.5 1h15l6 7v18h-21z" /><path d="M16 1v7h6.5" fill="#fff" /><path d="M12 12v9M7.5 16.5h9" /></svg>
      </div>
    </div>
  </div>
);

const Watermarks = () => (
  <div className="absolute inset-0 pointer-events-none overflow-hidden pl-[54px] pt-[15px] grid grid-cols-[repeat(10,209px)] auto-rows-[160px]">
    {Array.from({ length: 60 }).map((_, i) => (
      <div key={i} className="h-[160px] flex items-center">
        <div className="-rotate-[25deg] w-[134px] flex items-center text-white/15 [text-shadow:0_0_1px_rgba(70,70,70,0.13)]">
          <span className="text-[36px] leading-[36px] font-bold font-['Liberation_Sans',sans-serif]">3D</span>
          <div className="ml-[2px] flex flex-col">
            <span className="text-[16px] leading-[18px] whitespace-nowrap">打印资源库</span>
            <span className="text-[9px] leading-[10px] whitespace-nowrap">www.3dzyk.cn</span>
          </div>
        </div>
      </div>
    ))}
  </div>
);

export default function App() {
  return (
    <div className="relative w-[1911px] h-[974px] overflow-hidden bg-white flex flex-col font-['Noto_Sans','Noto_Sans_CJK_SC',sans-serif] text-[#111]">
      {/* title bar */}
      <div className="relative h-[32px] shrink-0 flex items-center pl-[4px]">
        <span className="w-[40px] text-[27px] leading-[32px] font-bold text-[#8091a3] tracking-[-1px] font-['Liberation_Sans',sans-serif]">NX</span>
        <Sep className="ml-[5px] h-[26px]" />
        <Save className="ml-[10px]" />
        <Sep className="ml-[7px] h-[26px]" />
        <Undo className="ml-[8px]" /><Tri className="ml-[12px] !border-t-[#aaa]" /><Undo flip className="ml-[11px]" />
        <Sep className="ml-[2px] h-[26px]" />
        <GrayDoc kind={0} className="ml-[9px]" /><GrayDoc kind={1} className="ml-[7px]" /><GrayDoc kind={2} className="ml-[8px]" /><GrayDoc kind={3} className="ml-[7px]" />
        <Sep className="ml-[2px] h-[26px]" />
        <Ball className="ml-[7px]" /><Tri className="ml-[7px]" />
        <Sep className="ml-[7px] h-[26px]" />
        <Brush className="ml-[7px]" />
        <Sep className="ml-[4px] h-[26px]" />
        <SwitchWin className="ml-[6px]" />
        <span className="ml-[5px] text-[17px] whitespace-nowrap">切换窗口</span>
        <WinIcon w={16} h={18} className="ml-[7px]" />
        <span className="ml-[4px] text-[17px] whitespace-nowrap">窗口</span>
        <Tri className="ml-[3px]" />
        <svg className="ml-[7px]" width="15" height="16" viewBox="0 0 15 16" fill="#eee" stroke="#bdbdbd"><path d="M1 1l13 3-2 11-10-3z" /><path d="M5 5l5 3-3 3" /></svg>
        <div className="ml-[7px] flex flex-col items-center"><div className="w-[8px] h-[2px] bg-black mb-[2px]" /><Tri /></div>
        <div className="absolute left-[1073px] top-0 h-[32px] flex items-center text-[18px] whitespace-nowrap text-[#1c1c1c]">NX 12 - 建模</div>
        <div className="absolute left-[1716px] top-0 h-[34px] flex items-center text-[17.5px] font-bold text-[#0a9a9a] font-['Open_Sans',sans-serif]">SIEMENS</div>
        <div className="absolute left-[1826px] top-[19px] w-[10px] h-[3px] bg-[#333]" />
        <svg className="absolute left-[1860px] top-[11px]" width="12" height="12" viewBox="0 0 12 12" fill="none" stroke="#333" strokeWidth="1.3"><path d="M3 3V1h8v7H9" /><rect x="1" y="3" width="8" height="8" /></svg>
        <svg className="absolute left-[1896px] top-[10px]" width="12" height="13" viewBox="0 0 12 13" stroke="#222" strokeWidth="1.4"><path d="M1 1l10 11M11 1L1 12" /></svg>
      </div>
      {/* tabs */}
      <div className="h-[38px] shrink-0 bg-[#d9d9d9] flex items-stretch text-[21px] text-[#1c1c1c]">
        <div className="w-[107px] bg-[#5ba3bc] text-white flex items-center justify-center whitespace-nowrap">文件(F)</div>
        <div className="w-[2px]" />
        {["主页", "曲线", "曲面", "分析"].map((t) => <div key={t} className="w-[68px] flex items-center justify-center">{t}</div>)}
        <div className="w-[68px] bg-white text-[#1f7390] flex items-center justify-center">视图</div>
        {["渲染", "工具"].map((t) => <div key={t} className="w-[68px] flex items-center justify-center">{t}</div>)}
        <div className="w-[111px] flex items-center justify-center whitespace-nowrap">应用模块</div>
        <div className="w-[900px]" />
        <div className="mt-[5px] w-[187px] h-[27px] bg-white border border-[#a6a6a6] flex items-center justify-between pl-[2px] pr-[5px] text-[16.5px] text-[#a9a9a9]">
          <span>查找命令</span>
          <svg width="16" height="16" viewBox="0 0 16 16" fill="none" stroke="#333" strokeWidth="1.2"><circle cx="10" cy="6" r="4.5" /><path d="M7 9.5L2 15" strokeWidth="2" /></svg>
        </div>
        <Maxi className="ml-[11px] self-center" />
        <svg className="ml-[13px] self-center" width="26" height="18" viewBox="0 0 26 18" fill="#fff" stroke="#111" strokeWidth="1.3"><path d="M13 1l12 11-4 5-8-7-8 7-4-5z" /></svg>
        <div className="ml-[17px] self-center w-[26px] h-[30px] rounded-full bg-gradient-to-b from-[#6d8fe0] to-[#2448ae] text-white font-bold text-[22px] leading-[30px] text-center font-['Liberation_Sans',sans-serif]">?</div>
      </div>
      {/* ribbon */}
      <div className="h-[117px] shrink-0 pt-[5px] flex border-b border-[#dadada]">
        <Group label="窗口" w="w-[146px]" tri="left-[128px]">
          <div className="ml-[13px] w-[33px] flex flex-col items-center shrink-0">
            <WinIcon w={31} h={32} className="shrink-0" />
            <div className="mt-[4px] h-[24px] leading-[24px] text-[17px] whitespace-nowrap">窗口</div>
            <Tri className="mt-[5px]" />
          </div>
          <div className="ml-[19px] mt-[5px] grid grid-cols-[13px_13px_13px] gap-x-[12px] gap-y-[16px] h-fit">
            {[0, 1, 2, 3, 4, 5, 6, 7, 8].map((n) => <SmallGrid key={n} n={n} />)}
          </div>
        </Group>
        <Group label="缩放" w="w-[112px]" tri="left-[97px]">
          <div className="ml-[14px] flex flex-col">
            <div className="mt-[7px] flex items-center text-[17px]"><ZoomIcon /><span className="ml-[3px]">缩放</span></div>
            <div className="mt-[16px] w-[86px] h-[27px] border border-[#a6a6a6] flex items-center pl-[2px] text-[17px]">0.6117</div>
          </div>
        </Group>
        <Group label="可见性" w="w-[532px]" tri="left-[516px]">
          <Big w="w-[85px]" className="ml-[12px]" label="显示和隐藏" icon={<ShowHide className="mt-[7px]" />} />
          <div className="ml-[9px] w-[105px] shrink-0 flex flex-col text-[17px]">
            <div className="mt-[1px] w-[69px] h-[27px] border border-[#a6a6a6] flex items-center justify-between pl-[2px] pr-[7px]"><span>1</span><div className="w-0 h-0 border-x-[5px] border-t-[6px] border-x-transparent border-t-black" /></div>
            <div className="mt-[6px] h-[24px] flex items-center"><Layers /><span className="ml-[5px] whitespace-nowrap">移动至图层</span></div>
            <div className="mt-[5px] h-[24px] flex items-center"><LayerSet /><span className="ml-[5px] whitespace-nowrap">图层设置</span></div>
          </div>
          <Big w="w-[68px]" className="ml-[9px]" label="编辑截面" icon={<Section className="mt-[3px]" />} />
          <Big w="w-[67px]" className="ml-[9px]" label="剪切截面" icon={<Section cut className="mt-[3px]" />} />
          <Big w="w-[101px]" className="ml-[9px]" label="全部通透显示" icon={<Trans className="mt-[2px]" />} />
          <div className="ml-[14px] w-[37px] flex flex-col items-center shrink-0">
            <div className="h-[34px] w-[37px] border border-[#dcdcdc] rounded-[3px] flex items-center justify-center shrink-0 -mt-[1px]"><ShowHide w={18} h={14} /></div>
            <div className="mt-[3px] h-[24px] leading-[24px] text-[17px] whitespace-nowrap">更多</div>
            <Tri className="mt-[6px]" />
          </div>
        </Group>
        <Group label="可视化" w="w-[428px]" tri="left-[409px]">
          <Big w="w-[51px]" className="ml-[12px]" label="首选项" icon={<Prefs />} />
          <Big w="w-[102px]" className="ml-[8px]" label="编辑对象显示" icon={<Palette />} />
          <Big w="w-[68px]" className="ml-[8px]" label="导出图像" icon={<ExportImg />} />
          <div className="ml-[11px] flex flex-col text-[17px] whitespace-nowrap">
            <div className="mt-[0px] h-[24px] flex items-center text-[#bdbdbd]"><svg width="15" height="14" viewBox="0 0 15 14" fill="#ddd" stroke="#bbb"><rect x="1" y="1" width="12" height="10" strokeDasharray="1.5 1" /><rect x="4" y="3" width="6" height="5" fill="#fff" /></svg><span className="ml-[5px]">捕捉艺术外观图像</span></div>
            <div className="mt-[5px] h-[24px] flex items-center"><svg width="15" height="16" viewBox="0 0 15 16"><rect x="2" y="0" width="13" height="12" fill="#e8e8e8" stroke="#333" /><rect x="2" y="0" width="13" height="3" fill="#333" /><path d="M0 14l6-7 2 2-5 7z" fill="#d9a92c" /></svg><span className="ml-[5px]">编辑背景</span></div>
            <div className="mt-[5px] h-[24px] flex items-center"><svg width="15" height="15" viewBox="0 0 15 15"><path d="M7 1l7 3v8l-7 3-6-3V4z" fill="#eee" stroke="#c25a4a" /><path d="M1 4l6 3 7-3M7 7v8" stroke="#c25a4a" fill="none" /></svg><span className="ml-[5px]">面的边</span></div>
          </div>
        </Group>
        <Group label="" w="w-[84px]" tri="hidden">
          <Big w="w-[69px]" className="ml-[8px]" label="真实着色" icon={<Sphere />} />
        </Group>
        <div className="flex-1 relative"><Tri className="absolute right-0 top-[96px]" /></div>
      </div>
      {/* toolbar */}
      <div className="relative h-[63px] shrink-0 flex items-center pl-[10px] pt-[2px] border-b-2 border-[#a9a9a9]">
        <Menu />
        <span className="ml-[4px] w-[62px] text-[17px] whitespace-nowrap">菜单(<span className="underline">M</span>)</span>
        <Tri className="ml-[3px]" />
        <Sep className="ml-[7px] h-[56px]" />
        <Select text="无选择过滤器" w="ml-[12px] w-[201px]" />
        <Select text="整个装配" w="ml-[10px] w-[212px]" />
        <Gray1 className="ml-[9px]" /><Gray2 className="ml-[12px]" /><Filter className="ml-[3px]" /><Tri className="ml-[6px]" />
        <UndoTarget className="ml-[11px]" /><Binoc className="ml-[12px]" /><DashCube className="ml-[10px]" /><DashBox className="ml-[9px]" /><Tri className="ml-[9px]" />
        <SolidA className="ml-[11px]" /><SolidB className="ml-[10px]" />
        <Hi className="ml-[7px]"><Snap /></Hi>
        <Hi className="ml-[1px]"><V><path d="M3 27L25 6" /><Dot x={25} y={6} /></V></Hi>
        <Hi className="ml-[3px]"><V><path d="M5 27L27 5" /><Dot x={16} y={16} /></V></Hi>
        <V w={28} h={32} className="ml-[6px]"><path d="M2 2c8 0 10 6 11 14s3 14 13 14" /><Dot x={13} y={16} /></V>
        <Hi className="ml-[9px]"><V w={32} h={32}><path d="M4 18L13 3l6 24 9-12" stroke="#8a2fb0" /><Dot x={4} y={18} /><Dot x={13} y={3} /><Dot x={19} y={27} /><Dot x={28} y={15} /><path d="M4 18c4-8 6 0 10 0s6-6 14-3" stroke="#111" /></V></Hi>
        <Hi className="ml-[1px]"><V w={32} h={26}><path d="M4 22c2-14 8-14 11-5s7 6 12-10" /><Dot x={4} y={22} /><Dot x={12} y={9} /><Dot x={20} y={20} /><Dot x={27} y={7} /></V></Hi>
        <V w={29} h={34} className="ml-[8px]"><path d="M14.5 1v32M1 24C4 14 9 13 14.5 13S25 14 28 24" /><Dot x={14.5} y={13} /></V>
        <Hi className="ml-[6px]"><V w={30} h={30}><circle cx="15" cy="15" r="13" /><Dot x={15} y={15} /><path d="M15 9v12M9 15h12" stroke={R} /></V></Hi>
        <V w={28} h={30} className="ml-[8px]"><circle cx="14" cy="15" r="11" /><Dot x={14} y={4} /><Dot x={14} y={26} /><Dot x={3} y={15} /><Dot x={25} y={15} /></V>
        <Hi className="ml-[7px]"><V w={30} h={30}><path d="M15 1v28M1 15h28" /><Dot x={15} y={15} r={3} /></V></Hi>
        <Hi className="ml-[3px]"><V w={30} h={30}><path d="M4 27L28 3" /><Dot x={8} y={23} r={3} /></V></Hi>
        <svg className="ml-[4px]" width="31" height="32" viewBox="0 0 31 32"><defs><linearGradient id="sf" x1="0" y1="0" x2="1" y2="1"><stop offset="0" stopColor="#a9c8ec" /><stop offset="1" stopColor="#eaf1fa" /></linearGradient></defs><path d="M1 10C7 2 20 1 31 6c-7 4-9 12-8 25-8-3-16-6-20-9-2-4-3-8-2-12z" fill="url(#sf)" stroke="#8aa8cc" strokeWidth=".6" /><Dot x={18} y={10} /></svg>
        <div className="ml-[11px] w-[22px] flex flex-col gap-[4px]"><Sm kind={0} /><Sm kind={1} /></div>
        <Sep className="ml-[12px] h-[56px]" />
        <ZoomIcon w={32} h={32} className="ml-[13px]" />
        <Hand className="ml-[9px]" /><Rotate className="ml-[11px]" /><Prism className="ml-[12px]" /><Wire className="ml-[9px]" /><Fit className="ml-[13px]" /><Tri className="ml-[9px]" />
        <Sheet className="ml-[11px]" /><Tri className="ml-[9px]" />
        <div className="ml-[11px] w-[25px] flex flex-col items-center gap-[3px]"><MiniCube /><ShowHide w={25} h={19} /></div>
        <div className="ml-[6px] flex flex-col gap-[30px]"><Tri /><Tri /></div>
        <Sep className="ml-[12px] h-[56px]" />
        <Tri className="absolute right-0 top-[48px]" />
      </div>
      {/* main */}
      <div className="flex-1 flex min-h-0">
        <Side />
        <Nav />
        <Viewport />
      </div>
      <Watermarks />
    </div>
  );
}
